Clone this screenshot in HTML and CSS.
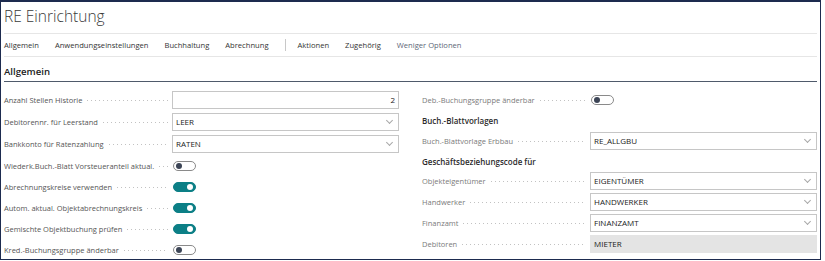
FILE: index.html
```html
<!DOCTYPE html>
<html>
<head>
    <title>RE Einrichtung</title>
    <link rel="stylesheet" href="styles.css">
</head>
<body>
    <div class="frame">
        <div class="title">RE Einrichtung</div>

        <nav class="actions">
            <span class="action">Allgemein</span>
            <span class="action">Anwendungseinstellungen</span>
            <span class="action">Buchhaltung</span>
            <span class="action">Abrechnung</span>
            <span class="sep"></span>
            <span class="action">Aktionen</span>
            <span class="action">Zugehörig</span>
            <span class="action less">Weniger Optionen</span>
        </nav>

        <section class="group">
            <div class="group-title">Allgemein</div>

            <div class="fields">
                <!-- left column -->
                <div class="col">
                    <div class="field tall">
                        <span class="lbl">Anzahl Stellen Historie</span><span class="lead"></span>
                        <div class="box num">2</div>
                    </div>
                    <div class="field tall">
                        <span class="lbl">Debitorennr. für Leerstand</span><span class="lead"></span>
                        <div class="box">LEER<span class="chev"></span></div>
                    </div>
                    <div class="field tall">
                        <span class="lbl">Bankkonto für Ratenzahlung</span><span class="lead"></span>
                        <div class="box">RATEN<span class="chev"></span></div>
                    </div>
                    <div class="field">
                        <span class="lbl">Wiederk.Buch.-Blatt Vorsteueranteil aktual.</span><span class="lead"></span>
                        <div><span class="toggle"></span></div>
                    </div>
                    <div class="field">
                        <span class="lbl">Abrechnungskreise verwenden</span><span class="lead"></span>
                        <div><span class="toggle on"></span></div>
                    </div>
                    <div class="field">
                        <span class="lbl">Autom. aktual. Objektabrechnungskreis</span><span class="lead"></span>
                        <div><span class="toggle on"></span></div>
                    </div>
                    <div class="field">
                        <span class="lbl">Gemischte Objektbuchung prüfen</span><span class="lead"></span>
                        <div><span class="toggle on"></span></div>
                    </div>
                    <div class="field">
                        <span class="lbl">Kred.-Buchungsgruppe änderbar</span><span class="lead"></span>
                        <div><span class="toggle"></span></div>
                    </div>
                </div>

                <!-- right column -->
                <div class="col right">
                    <div class="field">
                        <span class="lbl">Deb.-Buchungsgruppe änderbar</span><span class="lead"></span>
                        <div><span class="toggle"></span></div>
                    </div>
                    <div class="subhead">Buch.-Blattvorlagen</div>
                    <div class="field">
                        <span class="lbl">Buch.-Blattvorlage Erbbau</span><span class="lead"></span>
                        <div class="box">RE_ALLGBU<span class="chev"></span></div>
                    </div>
                    <div class="subhead short">Geschäftsbeziehungscode für</div>
                    <div class="field">
                        <span class="lbl">Objekteigentümer</span><span class="lead"></span>
                        <div class="box">EIGENTÜMER<span class="chev"></span></div>
                    </div>
                    <div class="field">
                        <span class="lbl">Handwerker</span><span class="lead"></span>
                        <div class="box">HANDWERKER<span class="chev"></span></div>
                    </div>
                    <div class="field">
                        <span class="lbl">Finanzamt</span><span class="lead"></span>
                        <div class="box">FINANZAMT<span class="chev"></span></div>
                    </div>
                    <div class="field">
                        <span class="lbl">Debitoren</span><span class="lead"></span>
                        <div class="box readonly">MIETER</div>
                    </div>
                </div>
            </div>
        </section>
    </div>
</body>
</html>
```

FILE: styles.css
```css
/* Page frame */
body {
    margin: 0;
    background-color: #ffffff;
    font-family: 'Open Sans', 'Noto Sans', sans-serif;
    color: #333333;
}

.frame {
    box-sizing: border-box;
    width: 821px;
    height: 260px;
    border: 1px solid #1d2b4f;
    border-top-width: 2px;
    padding: 0 3px;
    overflow: hidden;
}

.title {
    height: 31px;
    line-height: 29px;
    font-size: 15.5px;
    font-weight: 300;
    color: #3a3a3a;
    border-bottom: 1px solid #e6e6e6;
}

/* Action bar */
.actions {
    display: flex;
    align-items: center;
    height: 22px;
    border-bottom: 1px solid #e6e6e6;
    font-size: 7.6px;
    color: #333333;
}

.action {
    margin-right: 16px;
}

.action.less {
    color: #5c6677;
}

.sep {
    width: 1px;
    height: 12px;
    background-color: #c8c8c8;
    margin: 0 12px 0 0;
}

/* Group */
.group-title {
    height: 24px;
    line-height: 30px;
    font-size: 9.6px;
    font-weight: 600;
    color: #222222;
    border-bottom: 1px solid #4f5a6b;
}

.fields {
    display: flex;
    gap: 23px;
    padding-top: 7px;
}

.col {
    width: 395px;
    display: flex;
    flex-direction: column;
}

.field {
    display: grid;
    grid-template-columns: auto 1fr 227px;
    align-items: center;
    height: 21px;
    font-size: 7.5px;
}

.field.tall {
    height: 22px;
}

.lbl {
    color: #555555;
    white-space: nowrap;
}

.right .lbl {
    color: #7a7a7a;
}

.lead {
    height: 1px;
    margin: 1px 4px 0 5px;
    background-image: linear-gradient(to right, #c2c2c2 1px, transparent 1px);
    background-size: 4px 1px;
    background-repeat: repeat-x;
}

.subhead {
    height: 20px;
    line-height: 21px;
    font-size: 8px;
    font-weight: 600;
    color: #2b2b2b;
}

.subhead.short {
    height: 19px;
}

/* Inputs */
.box {
    position: relative;
    box-sizing: border-box;
    height: 18px;
    line-height: 16px;
    padding: 0 3px;
    border: 1px solid #c6c6c6;
    font-size: 8px;
    color: #222222;
    background-color: #ffffff;
}

.box.num {
    text-align: right;
}

.box.readonly {
    background-color: #e4e4e4;
    border-color: #e4e4e4;
}

.chev {
    position: absolute;
    right: 6px;
    top: 4px;
    width: 4px;
    height: 4px;
    border-right: 1px solid #a8a8a8;
    border-bottom: 1px solid #a8a8a8;
    transform: rotate(45deg);
}

/* Toggles */
.toggle {
    display: block;
    position: relative;
    box-sizing: border-box;
    width: 23px;
    height: 10px;
    margin-left: 1px;
    border: 1px solid #8a8a8a;
    border-radius: 5px;
    background-color: #ffffff;
}

.toggle::after {
    content: "";
    position: absolute;
    left: 2px;
    top: 1px;
    width: 6px;
    height: 6px;
    border-radius: 50%;
    background-color: #3c4556;
}

.toggle.on {
    background-color: #0c7f86;
    border-color: #0c7f86;
}

.toggle.on::after {
    left: auto;
    right: 2px;
    background-color: #ffffff;
}
```
